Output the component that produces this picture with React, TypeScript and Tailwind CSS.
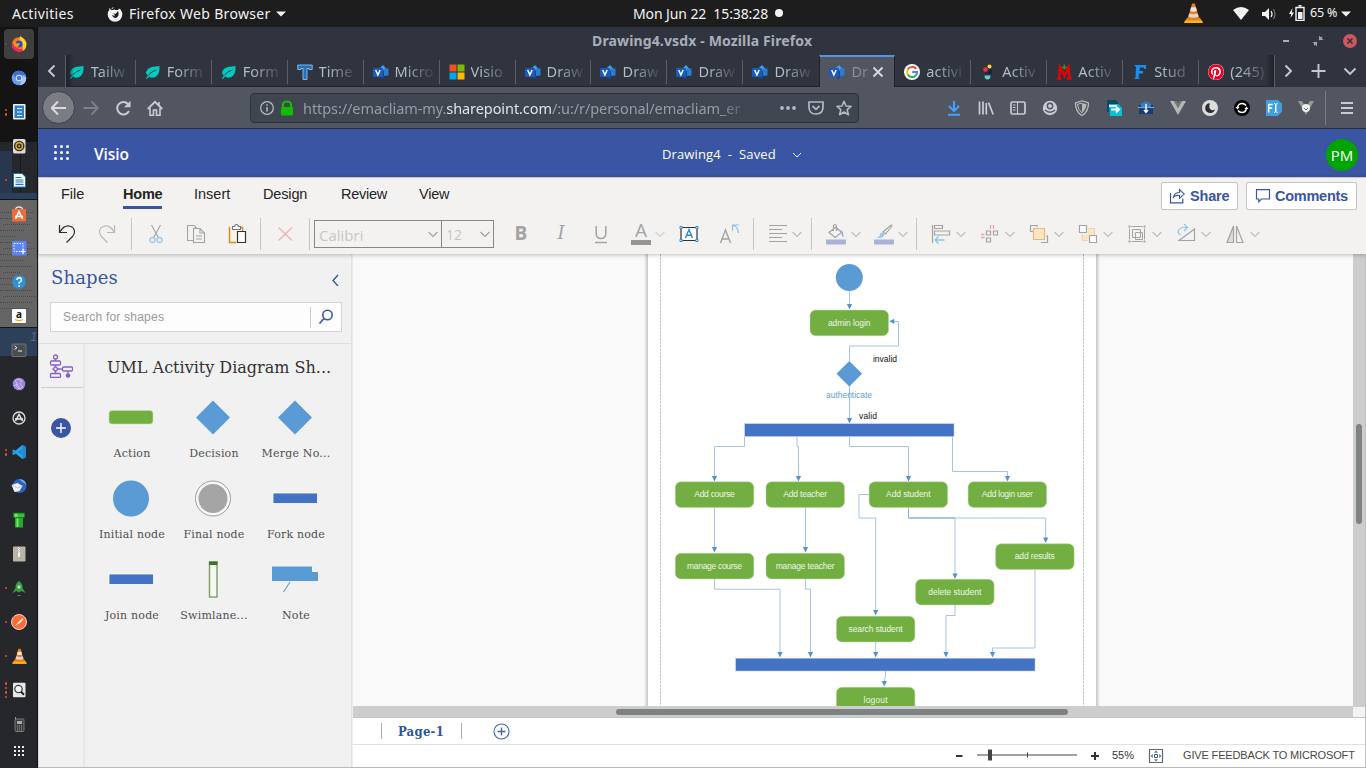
import React from "react";
import { FaPinterest } from "react-icons/fa";

type Kids = { children?: React.ReactNode; className?: string };

function Ic({ children, s = 16, className = "" }: Kids & { s?: number }) {
  return (
    <svg width={s} height={s} viewBox={`0 0 ${s} ${s}`} fill="none" className={`shrink-0 ${className}`}>
      {children}
    </svg>
  );
}

function Cone({ className = "" }: { className?: string }) {
  return (
    <svg viewBox="0 0 20 22" className={className}>
      <path d="M3 16h14l2.5 5.500H.5z" fill="#f08a00" />
      <path d="M1 19h18l1 2.500H0z" fill="#ffb31a" />
      <path d="M8.500 1h3l4.500 16q-6 3-12 0z" fill="#ef7d12" />
      <path d="M7.500 5h5l1.100 4q-3.600 1.500-7.200 0z" fill="#e8e8e8" />
      <path d="M5.500 11.500q4.500 1.500 9 0l1 3.500q-5.500 2-11 0z" fill="#d8d8d8" />
    </svg>
  );
}

function Caret() {
  return (
    <svg width="10" height="6" viewBox="0 0 10 6" className="shrink-0">
      <path d="M0 .5h10L5 5.500z" fill="#f2f2f2" />
    </svg>
  );
}

/* ---------- desktop top bar ---------- */
function TopBar() {
  return (
    <header className="flex h-[27px] shrink-0 items-center bg-[#1d1d1d] font-['Noto_Sans',sans-serif] text-[14px] text-[#f2f2f2]">
      <div className="w-[106px] pl-3 tracking-[0.350px]">Activities</div>
      <div className="flex w-[527px] items-center">
        <Ic className="ml-px mr-[6px]">
          <circle cx="8" cy="8.500" r="7.300" fill="#f2f2f2" />
          <path d="M3 0l2 3 3-2.500L13 0l-2 4H2z" fill="#1d1d1d" />
          <path d="M2 2l3 2.500L8 3l-2 4 4 1.500L7 12l-3-3z" fill="#f2f2f2" />
          <path d="M5 7l3.500 1L11 5q2 5-2 7-3 0-4-3l3 1-1-2z" fill="#1d1d1d" />
          <path d="M9 1l2 3 1-2.500z" fill="#1d1d1d" />
        </Ic>
        <span className="mr-[5px] w-[142px] whitespace-nowrap tracking-[0.330px]">Firefox Web Browser</span>
        <Caret />
      </div>
      <div className="flex w-[551px] items-center">
        <span className="-mt-px w-[142px] whitespace-pre tracking-[-0.1px]">Mon Jun 22  15:38:28</span>
        <span className="-mt-px size-2 rounded-full bg-[#f2f2f2]" />
      </div>
      <Cone className="-mt-[2px] h-[22px] w-[19px]" />
      <Ic className="ml-[30px]">
        <path d="M0 4q8-6 16 0L8 14z" fill="#f2f2f2" />
      </Ic>
      <Ic className="ml-[12px]">
        <path d="M1 6h3l4-4v12l-4-4H1z" fill="#f2f2f2" />
        <path d="M10 5q2 3 0 6" stroke="#eee" strokeWidth="1.300" />
        <path d="M12.500 3q3 5 0 10" stroke="#777" strokeWidth="1.200" />
      </Ic>
      <Ic className="-mt-px ml-[12px]">
        <path d="M3.500 3L0 9h2.200L1.500 13 5 7.500H2.800z" fill="#f2f2f2" />
        <path d="M7 2.500h8v13H7zM9.500.8h3" stroke="#f2f2f2" strokeWidth="1.400" />
        <path d="M9 7h4.500v7H9z" fill="#f2f2f2" />
      </Ic>
      <span className="ml-[5px] w-[31px] whitespace-nowrap text-[12.500px] tracking-[-0.200px]">65 %</span>
      <Caret />
    </header>
  );
}

/* ---------- dock ---------- */
const dockIcons: { dots: number; icon: React.ReactNode }[] = [
  {
    dots: 1,
    icon: (
      <>
        <circle cx="8" cy="8.500" r="7.200" fill="#ff7a1a" />
        <path d="M1 6q-1 9 7 9.800 5 0 7-4-8 4-12-3z" fill="#ec2461" />
        <path d="M9 0q6 3 6.500 8 0 5-4 7 2-6-3-9z" fill="#ffd52e" />
        <circle cx="8" cy="8" r="3.600" fill="#2d4fae" />
        <path d="M3 6l3 1.500L9 7l-2 4-4-1z" fill="#ff9a1f" />
      </>
    ),
  },
  {
    dots: 0,
    icon: (
      <>
        <circle cx="8" cy="8" r="7.300" fill="#6b9bf0" />
        <path d="M8 .7A7.300 7.300 0 0 1 14.500 5H8L5 8 2 4q2-3.300 6-3.300z" fill="#3f6fd2" />
        <path d="M9 15.200q6-1 6.300-7.500L12 6z" fill="#a9c6fa" />
        <circle cx="8" cy="8" r="3.200" fill="#dce8fd" />
        <circle cx="8" cy="8" r="2.300" fill="#4777d8" />
      </>
    ),
  },
  {
    dots: 2,
    icon: (
      <>
        <rect x="2" y="0" width="12.500" height="15.500" rx="1" fill="#f4f4f4" />
        <rect x="3.500" y="1.500" width="9.500" height="12.500" fill="#2b7fd0" />
        <path d="M6 4.500h5M6 8h5M6 11.500h5" stroke="#fff" strokeWidth="1.200" />
      </>
    ),
  },
  {
    dots: 0,
    icon: (
      <>
        <rect x="2" y="1" width="12.500" height="14.500" rx="1.500" fill="#dcdad2" />
        <circle cx="8.200" cy="8" r="5.300" fill="#303030" />
        <circle cx="8.200" cy="8" r="3.200" stroke="#e0b22c" strokeWidth="1.400" />
        <circle cx="8.200" cy="8" r="1" fill="#e0b22c" />
      </>
    ),
  },
  {
    dots: 1,
    icon: (
      <>
        <path d="M2 1h9l4 4v10.500H2z" fill="#1678b8" />
        <path d="M3 2h8l3 3v9.500H3z" fill="#fff" />
        <path d="M4.500 5.500h6M4.500 8h8M4.500 10h8M4.500 12.300h8" stroke="#1678b8" strokeWidth="1.200" />
      </>
    ),
  },
  {
    dots: 0,
    icon: (
      <>
        <path d="M4.500 4q0-3 3.500-3t3.500 3" stroke="#e6e0d8" strokeWidth="1.300" />
        <rect x="1" y="3" width="14" height="12.500" rx="1" fill="#ee6a3a" />
        <path d="M4.500 13L8 5.500l3.500 7.500M4 10.500h8" stroke="#fff" strokeWidth="1.600" />
      </>
    ),
  },
  {
    dots: 0,
    icon: (
      <>
        <rect x="1" y="1" width="14.500" height="14.500" rx="1" fill="#5a86ee" />
        <path d="M3 3.500h9v8H3z" stroke="#fff" strokeDasharray="1.500 1.300" />
        <path d="M12 9v5M9.500 11.500h5" stroke="#fff" strokeWidth="1.200" />
      </>
    ),
  },
  {
    dots: 0,
    icon: (
      <>
        <circle cx="8" cy="8" r="6.700" fill="#2e93d6" />
        <path d="M5.800 6q.2-2.300 2.400-2.300T10.500 6q0 1.300-2.300 2.500v1.200" stroke="#fff" strokeWidth="1.400" />
        <circle cx="8.200" cy="12" r=".9" fill="#fff" />
      </>
    ),
  },
  {
    dots: 0,
    icon: (
      <>
        <rect x="1" y="1" width="14" height="14" rx="1" fill="#fff" />
        <text x="8" y="10" textAnchor="middle" fontSize="10" fontWeight="bold" fontFamily="Noto Sans, sans-serif" fill="#111">
          a
        </text>
        <path d="M4 11.500q4 2.300 8 0" stroke="#f5a623" strokeWidth="1.100" />
      </>
    ),
  },
  {
    dots: 0,
    icon: (
      <>
        <rect x="1" y="2" width="14" height="12.500" rx="1" fill="#4a4d4f" stroke="#888" strokeWidth=".7" />
        <path d="M3.500 4L6 5.700 3.500 7.500M7 9h4" stroke="#eee" />
      </>
    ),
  },
  {
    dots: 0,
    icon: (
      <>
        <circle cx="8" cy="8" r="6.300" fill="#9b86dc" />
        <path d="M4 5l3-2 4 2-2 3 3 3-4 2-3-3 1-3zM3 10l3-2 3 5" stroke="#d2c4f4" strokeWidth=".9" />
      </>
    ),
  },
  {
    dots: 0,
    icon: (
      <>
        <circle cx="8" cy="8" r="6" fill="#303030" stroke="#ddd" strokeWidth="1.300" />
        <path d="M4.500 11L8 4.500l3.500 6.500M4 9h8" stroke="#eee" strokeWidth="1.400" />
      </>
    ),
  },
  {
    dots: 2,
    icon: (
      <>
        <path d="M11.500 1L15 2.500v11L11.500 15 2 6.500 1 9.500z" fill="#1f8ad2" />
        <path d="M11.500 1v14L1 6.500l1.500-1L11 11V5L2.500 11 1 9.700z" fill="#2aa3ec" />
      </>
    ),
  },
  {
    dots: 0,
    icon: (
      <>
        <circle cx="8.500" cy="8" r="7" fill="#2f62bd" />
        <path d="M8 1q6 0 7.500 6l-4-3z" fill="#6fb0ee" />
        <path d="M.5 7l6-2 5 3-3 5-5 1z" fill="#eef1f5" />
        <path d="M1 7l5.500 3 5-2" stroke="#b4bfd0" strokeWidth=".8" />
      </>
    ),
  },
  {
    dots: 0,
    icon: (
      <>
        <path d="M2.500 1h11v4.500h-11z" fill="#34c234" />
        <path d="M4 6h8v9.500H4z" fill="#2aa82a" />
        <path d="M4 1h2.500v4H4zM5.500 6.500h2v8.500h-2z" fill="#6fe86f" />
        <path d="M2.500 1h11" stroke="#0d6b18" />
      </>
    ),
  },
  {
    dots: 0,
    icon: (
      <>
        <rect x="2" y=".5" width="12.500" height="15" rx="1" fill="#b9b4a6" />
        <path d="M7.500 1v9" stroke="#f5f5f5" strokeDasharray="1 1" />
        <path d="M8.500 2v9" stroke="#f5f5f5" strokeDasharray="1 1" />
        <path d="M7 6.500h2V11H7z" fill="#f2f2f2" />
      </>
    ),
  },
  {
    dots: 1,
    icon: (
      <>
        <path d="M8 1q4 3 3.500 7l3 5-4-2-2.500 1.500L5.500 11l-4 2 3-5Q4 4 8 1z" fill="#3d9a41" />
        <circle cx="8" cy="7" r="1.800" fill="#a7e0c0" />
        <path d="M6 15.500h4" stroke="#666" />
      </>
    ),
  },
  {
    dots: 1,
    icon: (
      <>
        <circle cx="8" cy="8" r="7.500" fill="#ff6c37" stroke="#ffe3d6" strokeWidth=".9" />
        <path d="M3.500 12.500L9 6.500l2.500-2.300 1 1L10 8z" fill="#fff" />
      </>
    ),
  },
  { dots: 1, icon: null },
  {
    dots: 4,
    icon: (
      <>
        <rect x="2" y=".8" width="12.500" height="14.500" rx="1" fill="#e8e8e6" />
        <circle cx="7.500" cy="7" r="3.700" stroke="#444" strokeWidth="1.300" fill="#f5f5f5" />
        <path d="M10 9.800l3 3" stroke="#222" strokeWidth="2" />
      </>
    ),
  },
  {
    dots: 0,
    icon: (
      <>
        <path d="M4.500 1v4" stroke="#999" />
        <rect x="4" y="3" width="9" height="12.500" rx="1" fill="#3c3c3c" stroke="#8c8c8c" strokeWidth=".8" />
        <path d="M6 5h5v3H6z" fill="#aaa" />
        <path d="M6 10h5M6 12h5M6 14h5" stroke="#999" strokeDasharray="1 1" />
      </>
    ),
  },
];

const previewRows = [86, 84, 70, 62, 40, 80, 82, 78, 60, 84, 44, 52, 34, 85, 86, 83, 76];

function Dock() {
  return (
    <nav className="relative w-[38px] shrink-0 overflow-hidden bg-[#26272b]">
      <div className="absolute inset-0 flex flex-col">
        <div className="h-[115px] bg-[#141414]" />
        <div className="flex h-[51px] items-stretch bg-[#24272c] pt-[9px]">
          <div className="w-3 bg-[#28374c]" />
          <div className="ml-2 flex-1 border-l border-[#17191c] bg-[#26282c]" />
        </div>
        <div className="h-[6px] bg-[#2c405e]" />
        <div className="h-[129px] border-y border-[#161616] bg-[#656565] pt-3">
          {previewRows.map((w, i) => (
            <div
              key={i}
              className="mb-[5px] h-px border-t border-dotted border-[#474747]"
              style={{ width: `${w}%`, marginLeft: i % 4 === 2 ? 3 : 0 }}
            />
          ))}
        </div>
        <div className="h-[28px] bg-[#2c405a] pr-px text-right font-['Liberation_Sans',sans-serif] text-[12px] italic text-[#5c6a7b]">1</div>
        <div className="flex-1 bg-[#26272b]" />
      </div>
      <div className="relative flex h-full flex-col border-r border-[#121212]">
        {dockIcons.map((d, i) => (
          <div key={i} className="flex h-[34px] shrink-0 items-center">
            <div className="flex w-[4px] flex-col items-end gap-[2px]">
              {Array.from({ length: d.dots }, (_, k) => (
                <i key={k} className="-mr-[3px] size-[2.500px] shrink-0 rounded-full bg-[#e5532a]" />
              ))}
            </div>
            <div className={`flex size-[30px] items-center justify-center rounded-[4px] ${i === 0 ? "bg-[#4a4a4a]/80" : ""}`}>
              {d.icon ? <Ic>{d.icon}</Ic> : <Cone className="h-4 w-[15px]" />}
            </div>
          </div>
        ))}
        <div className="flex flex-1 items-start pl-[14px] pt-[5px]">
          <div className="grid grid-cols-3 gap-[2px]">
            {Array.from({ length: 9 }, (_, k) => (
              <i key={k} className="size-[2px] bg-[#eee]" />
            ))}
          </div>
        </div>
      </div>
    </nav>
  );
}

/* ---------- browser chrome ---------- */
const Leaf = () => (
  <Ic>
    <path d="M1 9.500q0-5 6-6.500Q11 2.500 14.500 2q.5 8.500-4 11Q6 14.500 4 12.500L2 15 .8 14.500 3 11.500z" fill="#00c9c0" />
    <path d="M3.500 11Q7 7 11.500 6" stroke="#30343f" />
  </Ic>
);
const VisioFav = () => (
  <Ic>
    <path d="M5 6l5-5 3.500 4L9 11z" fill="#45a3ea" />
    <path d="M11 4.500h4.500v7L10 12z" fill="#2b7cd3" />
    <path d="M6 10l5-4v7.500L8.500 15.500z" fill="#16478f" />
    <rect x="0" y="4" width="10" height="9" rx="1" fill="#185abd" />
    <path d="M2.700 6l2.200 5 2.200-5" stroke="#fff" strokeWidth="1.500" />
  </Ic>
);
const tabs: { icon: React.ReactNode; t: string }[] = [
  { icon: <Leaf />, t: "Tailw" },
  { icon: <Leaf />, t: "Form" },
  { icon: <Leaf />, t: "Form" },
  {
    icon: (
      <Ic>
        <path d="M.8 1h14.400v4.500h-3.200V4.500h-2v11H6v-11H4v1H.8z" fill="#2470b8" stroke="#8fc3ee" strokeWidth=".9" />
      </Ic>
    ),
    t: "Time",
  },
  { icon: <VisioFav />, t: "Micro" },
  {
    icon: (
      <Ic>
        <path d="M.5.500h7v7h-7z" fill="#f25022" />
        <path d="M8.500.5h7v7h-7z" fill="#7fba00" />
        <path d="M.5 8.500h7v7h-7z" fill="#00a4ef" />
        <path d="M8.500 8.500h7v7h-7z" fill="#ffb900" />
      </Ic>
    ),
    t: "Visio",
  },
  { icon: <VisioFav />, t: "Draw" },
  { icon: <VisioFav />, t: "Draw" },
  { icon: <VisioFav />, t: "Draw" },
  { icon: <VisioFav />, t: "Draw" },
  { icon: <VisioFav />, t: "Dr" },
  {
    icon: (
      <Ic>
        <circle cx="8" cy="8" r="8" fill="#fff" />
        <path d="M12.300 5A5 5 0 0 0 3.800 5.500" stroke="#ea4335" strokeWidth="2" />
        <path d="M3.800 5.500a5 5 0 0 0 0 5" stroke="#fbbc05" strokeWidth="2" />
        <path d="M3.800 10.500a5 5 0 0 0 7.700 1.300" stroke="#34a853" strokeWidth="2" />
        <path d="M11.500 11.800Q13 10.500 13 8H8.200" stroke="#4285f4" strokeWidth="2" />
      </Ic>
    ),
    t: "activi",
  },
  {
    icon: (
      <Ic>
        <circle cx="9.500" cy="2.500" r="2" fill="#ffd92e" />
        <circle cx="5.500" cy="5.500" r="2.300" fill="#f5303c" />
        <path d="M8 5.500h4V10H5V8.500h3z" fill="#15224a" />
        <path d="M4.500 11.500h6q0 4-3 4t-3-4z" fill="#5fd3c8" />
      </Ic>
    ),
    t: "Activ",
  },
  {
    icon: (
      <Ic>
        <path d="M1 14.500h4M11 14.500h4.500M3 14L4 3l4.500 9L12.500 3l1 11" stroke="#f00000" strokeWidth="2.300" />
        <path d="M8.300.5v5M6 3.500h5" stroke="#3c8f2d" strokeWidth="1.500" />
      </Ic>
    ),
    t: "Activ",
  },
  {
    icon: (
      <Ic>
        <path d="M2 1h12v4h-1.500L11.500 3.500H8L7.500 7H11v2.500H7l-.5 4L8 15H2l1.500-1.500L4 3z" fill="#1b8df0" />
      </Ic>
    ),
    t: "Stud",
  },
  {
    icon: (
      <span className="flex size-4 shrink-0 items-center justify-center rounded-full bg-white">
        <FaPinterest size={16} color="#e60023" />
      </span>
    ),
    t: "(245)",
  },
];

function Tabs() {
  return (
    <div className="flex h-[32px] shrink-0 items-stretch text-[#b4bac8]">
      <div className="flex w-[28px] items-center justify-center border-r border-[#5b5f6a]">
        <Ic s={14}>
          <path d="M9.500 1.500L4 7l5.500 5.500" stroke="#c4c8d0" strokeWidth="1.900" />
        </Ic>
      </div>
      <div className="relative flex min-w-0 w-[1208px] overflow-hidden pb-px shadow-[inset_0_-1px_0_#20232a]">
        {tabs.map((tab, i) => {
          const on = i === 10;
          return (
            <div
              key={i}
              className={`relative flex w-[75.970px] shrink-0 items-center ${i === 0 ? "-ml-[6.300px]" : ""} ${
                on ? "-mb-px border-x border-t-2 border-x-[#20232a] border-t-[#5294e2] bg-[#525661] pl-[9px] pt-0" : "pl-[9px] pt-[2px]"
              }`}
            >
              {tab.icon}
              <span
                className={`ml-[6px] whitespace-nowrap font-['Noto_Sans',sans-serif] text-[14.500px] tracking-[0.100px] [mask-image:linear-gradient(90deg,#000_25%,rgba(0,0,0,.15)_36px)] ${
                  on ? "w-[17px] opacity-60" : ""
                }`}
              >
                {tab.t}
              </span>
              {on && (
                <Ic s={12} className="ml-[4px]">
                  <path d="M1.500 1.500l9 9m0-9l-9 9" stroke="#d5d8de" strokeWidth="1.900" />
                </Ic>
              )}
              {!on && i !== 9 && <i className="absolute right-0 top-[5px] h-6 w-px bg-[#5b5f6a]" />}
            </div>
          );
        })}
        <i className="absolute inset-y-0 right-0 w-[8px] bg-gradient-to-r from-transparent to-[#202228]" />
        <i className="absolute inset-y-0 left-0 w-[8px] bg-gradient-to-l from-transparent to-[#202228]" />
      </div>
      <div className="flex flex-1 items-center gap-[16px] border-l border-[#5b5f6a] pl-[6px]">
        <Ic s={14}>
          <path d="M4.500 1.500L10 7l-5.500 5.500" stroke="#c4c8d0" strokeWidth="1.900" />
        </Ic>
        <Ic s={16}>
          <path d="M7.500 1v14M.5 8h14" stroke="#c4c8d0" strokeWidth="1.900" />
        </Ic>
        <Ic s={14}>
          <path d="M1.500 4.500L7 10l5.500-5.500" stroke="#c4c8d0" strokeWidth="1.900" />
        </Ic>
      </div>
    </div>
  );
}

const extIcons: React.ReactNode[] = [
  <path d="M8 1v9.500M3 6l5 5 5-5M2 14.700h12" stroke="#45a1ff" strokeWidth="2" />,
  <path d="M1.500 1.500v13M5 1.500v13M8.300 3v11.500M10.500 2.500l4.700 12" stroke="#c8ccd4" strokeWidth="1.700" />,
  <>
    <rect x="1" y="2" width="14" height="12" rx="1.500" stroke="#c8ccd4" strokeWidth="1.700" />
    <path d="M7.500 2v12M3 5h2.500M3 7.500h2.500M3 10h2.500" stroke="#c8ccd4" />
  </>,
  <>
    <circle cx="8" cy="8" r="7.200" fill="#c8ccd4" />
    <circle cx="8" cy="6" r="2.700" fill="#c8ccd4" stroke="#525661" strokeWidth="1.500" />
    <path d="M3 10q5 4.500 10 0" stroke="#525661" strokeWidth="1.500" />
  </>,
  <>
    <path d="M8 .8L14.500 3q0 9-6.500 12.500Q1.500 12 1.500 3z" stroke="#c2c2c2" strokeWidth="1.200" />
    <path d="M8 3l4.500 1.300Q12 10 8 13z" fill="#b8b8b8" />
    <path d="M8 3L3.500 4.300Q4 10 8 13" stroke="#c2c2c2" />
  </>,
  <>
    <path d="M1 0h9l2 2v10H1z" fill="#0d4a68" />
    <path d="M3 4h9l4 4v8H4z" fill="#06c1dc" />
    <path d="M3 6h8M5 9.500h8M10 6.500l3 3-3 3" stroke="#fff" strokeWidth="1.800" />
  </>,
  <>
    <path d="M1 5h14v9H1z" fill="#153d73" />
    <path d="M3 4q5-5 10 0v3H3z" fill="#3a7cc8" />
    <path d="M0 7.500h16" stroke="#6fa6de" strokeWidth="1.200" />
    <path d="M8 4v8M6 10l2 2.500L10 10" stroke="#fff" strokeWidth="1.400" />
  </>,
  <>
    <path d="M0 1h4l4 7 4-7h4L8 15z" fill="#b6b6b6" />
    <path d="M4 1h2.500L8 3.500 9.500 1H12L8 8z" fill="#777" />
  </>,
  <>
    <circle cx="8" cy="8" r="8" fill="#dcdcdc" />
    <path d="M8 3.200a4.900 4.900 0 1 0 4.900 6q-2.500 2-4.500 0T8 3.200z" fill="#2e2e30" />
  </>,
  <>
    <circle cx="8" cy="8" r="8" fill="#050505" />
    <path d="M3.500 7.500Q4.500 3.500 8 3.500q2.500 0 4 2M12.500 8.500q-1 4-4.500 4-2.500 0-4-2" stroke="#fff" strokeWidth="1.500" />
    <path d="M1.500 7h4L3.500 9.500zM10.500 9h4l-2-2.500z" fill="#fff" />
  </>,
  <>
    <path d="M0 0h12l4 3.500v8L12 16H0z" fill="#3f9fe0" />
    <path d="M2.700 12.500V4.500h4M3 8h3.200" stroke="#fff" strokeWidth="1.400" />
    <path d="M8 3.500q1.800 0 1.800 1.300v6.400q0 1.300-1.800 1.300m3.600-9q-1.800 0-1.800 1.300v6.400q0 1.300 1.800 1.300" stroke="#fff" />
  </>,
  <>
    <path d="M0 1h4l4 7 4-7h4L8 15z" fill="#9a9a9a" />
    <circle cx="8" cy="8" r="4" fill="#eee" />
    <path d="M6 8l2 2 2-2" stroke="#777" />
  </>,
];

function NavBar() {
  return (
    <div className="flex h-[42px] shrink-0 items-center border-b border-[#2b2d35] bg-[#525661]">
      <div className="ml-[4px] flex size-[33px] shrink-0 items-center justify-center rounded-full border border-[#3d4049] bg-[#7a7d84]">
        <Ic>
          <path d="M15 8H1.500M7 1.500L.7 8 7 14.500" stroke="#d8dade" strokeWidth="1.900" />
        </Ic>
      </div>
      <Ic className="ml-[8px]">
        <path d="M.5 8h14M8.500 1.500L14.800 8l-6.300 6.500" stroke="#7d818a" strokeWidth="1.800" />
      </Ic>
      <Ic className="ml-[16px]">
        <path d="M14 11A6.200 6.200 0 1 1 13 4l1.500 2" stroke="#c8ccd4" strokeWidth="2" />
        <path d="M15.500.8v6.500H9z" fill="#c8ccd4" />
      </Ic>
      <Ic className="ml-[16px]">
        <path d="M.7 9L8 1.800 15.300 9" stroke="#c8ccd4" strokeWidth="1.800" />
        <path d="M3 8v7.200h3.500V10h3v5.200H13V8M12 2v3" stroke="#c8ccd4" strokeWidth="1.600" />
      </Ic>
      <div className="ml-[87px] flex h-[30px] w-[609px] shrink-0 items-center rounded-[4px] border border-[#2d3039] bg-[#404552]">
        <Ic className="ml-[8px]">
          <circle cx="8" cy="8" r="6.300" stroke="#b9bdc6" strokeWidth="1.200" />
          <path d="M8 7v4.500M8 4.300v1.500" stroke="#b9bdc6" strokeWidth="1.500" />
        </Ic>
        <Ic className="ml-[4px]">
          <path d="M4 8V5q0-3.500 4-3.500T12 5v3" stroke="#12bc00" strokeWidth="2.200" />
          <rect x="2" y="7" width="12" height="8.500" rx="1" fill="#12bc00" />
        </Ic>
        <div className="ml-[8px] mt-[2px] w-[441px] whitespace-nowrap font-['Noto_Sans',sans-serif] text-[14.500px] tracking-[-0.080px] text-[#989ca6] [mask-image:linear-gradient(90deg,#000_94%,rgba(0,0,0,.25))]">
          https://emacliam-my.<span className="text-[#dfe2e8]">sharepoint.com</span>/:u:/r/personal/emacliam_er
        </div>
        <Ic className="ml-[36px]">
          <circle cx="2" cy="8" r="1.900" fill="#b4b8c2" />
          <circle cx="8" cy="8" r="1.900" fill="#b4b8c2" />
          <circle cx="14" cy="8" r="1.900" fill="#b4b8c2" />
        </Ic>
        <Ic className="ml-[12px]">
          <path d="M1 2h14v5q0 7-7 7T1 7z" stroke="#b4b8c2" strokeWidth="1.700" />
          <path d="M4.500 6L8 9.300 11.500 6" stroke="#b4b8c2" strokeWidth="1.800" />
        </Ic>
        <Ic className="ml-[12px]">
          <path d="M8 1.300l2 4.700 5 .4-3.800 3.300 1.200 5L8 12l-4.400 2.700 1.200-5L1 6.400 6 6z" stroke="#b4b8c2" strokeWidth="1.600" strokeLinejoin="round" />
        </Ic>
      </div>
      <div className="ml-[87px] flex shrink-0 gap-4">
        {extIcons.map((e, i) => (
          <Ic key={i}>{e}</Ic>
        ))}
      </div>
      <i className="ml-[11px] h-[34px] w-px shrink-0 bg-[#787c85]" />
      <Ic className="ml-[13px]">
        <path d="M2 3h12M2 8h12M2 13h12" stroke="#c8ccd4" strokeWidth="1.800" />
      </Ic>
    </div>
  );
}

function TitleBar() {
  return (
    <div className="flex h-[28px] shrink-0 items-center pl-[554px] text-[#a9aebb]">
      <div className="-mt-[2px] w-[683px] whitespace-nowrap font-['Noto_Sans',sans-serif] text-[14px] font-bold tracking-[0.140px]">
        Drawing4.vsdx - Mozilla Firefox
      </div>
      <div className="flex items-center">
        <Ic s={16} className="ml-[3px]">
          <path d="M5 8h6" stroke="#c0c3ca" strokeWidth="1.700" />
        </Ic>
        <Ic s={16} className="ml-[16px]">
          <path d="M9 2.500V7h4.500zM7 13.500V9H2.500z" fill="#a0a4ad" />
          <path d="M9 7l3-3M7 9l-3 3" stroke="#a0a4ad" strokeWidth="1.200" />
        </Ic>
        <span className="ml-[17px] flex size-[14px] items-center justify-center rounded-full bg-[#cc575d]">
          <Ic s={8}>
            <path d="M1.500 1.500l5 5m0-5l-5 5" stroke="#2f343f" strokeWidth="1.700" />
          </Ic>
        </span>
      </div>
    </div>
  );
}

/* ---------- Visio ---------- */
function Chev({ className = "", c = "#bdbdbd" }: { className?: string; c?: string }) {
  return (
    <Ic s={10} className={className}>
      <path d="M.5 3L5 7.500 9.500 3" stroke={c} strokeWidth="1.100" />
    </Ic>
  );
}
const Sep = ({ className = "" }: { className?: string }) => <i className={`h-8 w-px shrink-0 bg-[#c6c6c6] ${className}`} />;
const G = "#a3a3a3";

function Ribbon() {
  const font = "font-['Open_Sans',sans-serif]";
  return (
    <div className="relative z-10 flex h-[77px] shrink-0 flex-col border-l border-t border-[#c8c6c4] bg-[#f3f2f1] shadow-[0_1px_4px_rgba(0,0,0,0.25)]">
      <div className="flex h-[40px] items-start font-['Liberation_Sans',sans-serif] text-[14.500px] text-[#252423]">
        <span className="ml-[22px] mt-[6px] w-[62px]">File</span>
        <span className="mt-[6px] w-[71px]">
          <span className="inline-block h-[25px] w-[39px] whitespace-nowrap border-b-[3px] border-[#3955a3] font-bold tracking-[-0.200px]">Home</span>
        </span>
        <span className="mt-[6px] w-[69px]">Insert</span>
        <span className="mt-[6px] w-[78px] tracking-[-0.150px]">Design</span>
        <span className="mt-[6px] w-[78px] tracking-[-0.250px]">Review</span>
        <span className="mt-[6px] tracking-[-0.250px]">View</span>
        <div className="ml-auto mr-[9px] mt-[4px] flex gap-[8px] font-bold text-[#3955a3]">
          <button className="flex h-[28px] w-[77px] items-center rounded-[2px] border border-[#c4c4c4] bg-white pl-[7px]">
            <Ic>
              <path d="M1.500 5v9.900h12.300V10.500" stroke="#3955a3" strokeWidth="1.200" />
              <path d="M4.500 9Q5.500 4.500 10.500 4.500V1.500L15.300 6l-4.800 4.300V7.500Q6.500 7 4.500 9z" stroke="#3955a3" strokeWidth="1.100" />
            </Ic>
            <span className="ml-[5px] mt-px tracking-[-0.200px]">Share</span>
          </button>
          <button className="flex h-[28px] w-[111px] items-center rounded-[2px] border border-[#c4c4c4] bg-white pl-[8px]">
            <Ic>
              <path d="M1.500 1.600h13v9.400H6.500L3.800 13.800V11H1.500z" stroke="#3955a3" strokeWidth="1.200" />
            </Ic>
            <span className="ml-[4px] mt-px tracking-[-0.250px]">Comments</span>
          </button>
        </div>
      </div>
      <div className="flex h-8 items-center pl-4">
        <Ic s={24}>
          <path d="M4.500 3v7.500H12M5 10Q8.500 3.500 14 4q5.500 1 5.500 6 0 2-2 4.500L11.500 20.500" stroke="#2b2b2b" strokeWidth="1.200" />
        </Ic>
        <Ic s={24} className="ml-4">
          <path d="M19.500 3v7.500H12M19 10Q15.500 3.500 10 4q-5.500 1-5.500 6 0 2 2 4.500l6 6" stroke="#b8b8b8" strokeWidth="1.200" />
        </Ic>
        <Sep className="ml-3" />
        <Ic s={24} className="ml-3">
          <path d="M7.500 3l6.800 12.500M16.500 3L9.700 15.500" stroke={G} strokeWidth="1.100" />
          <circle cx="8.500" cy="18" r="2.500" stroke="#9fc7e6" strokeWidth="1.300" />
          <circle cx="15.500" cy="18" r="2.500" stroke="#9fc7e6" strokeWidth="1.300" />
        </Ic>
        <Ic s={24} className="ml-4">
          <path d="M9 18.500H3.500v-15H10l3 3M9.500 6.500h6.500l4.500 4.500v9.500h-11zM16 6.500V11h4.500M12 14h6M12 17h6" stroke={G} strokeWidth="1.100" />
        </Ic>
        <Ic s={24} className="ml-[17px]">
          <path d="M5 5.500H4.500v15H11M16 5.500h1.500V9" stroke="#e08a1e" strokeWidth="1.500" />
          <path d="M6 7h11v3H12v9H6z" fill="#fbf6ec" />
          <path d="M7.500 7.500v-3h2q.5-2 2-2t2 2h2v3z" stroke="#777" strokeWidth="1.100" fill="#fff" />
          <path d="M12.500 9.500h8v11h-8z" stroke="#333" strokeWidth="1.200" fill="#fff" />
        </Ic>
        <Sep className="ml-[11px]" />
        <Ic s={24} className="ml-3">
          <path d="M5.500 5.500l13.500 13M19 5.500L5.500 18.500" stroke="#f2aeb0" strokeWidth="1.200" />
        </Ic>
        <Sep className="ml-3" />
        <div className={`ml-1 flex h-7 w-[128px] shrink-0 items-center justify-between border border-[#8a8886] pl-1 pr-[3px] text-[15px] text-[#c8c6c4] ${font}`}>
          <span className="mt-[2px]">Calibri</span>
          <Chev c="#a0a0a0" />
        </div>
        <div className={`-ml-px flex h-7 w-[53px] shrink-0 items-center justify-between border border-[#8a8886] pl-1 pr-[3px] text-[14px] text-[#c8c6c4] ${font}`}>
          <span>12</span>
          <Chev c="#9c9c9c" />
        </div>
        <span className={`-mt-[2px] ml-[15px] w-6 text-center text-[19px] font-bold leading-6 text-[#a3a3a3] ${font}`}>B</span>
        <span className="-mt-[2px] ml-4 w-6 text-center font-['DejaVu_Serif',serif] text-[18px] italic leading-6 text-[#a3a3a3]">I</span>
        <Ic s={24} className="ml-4">
          <path d="M7.200 4v7.500q0 5 4.800 5t4.800-5V4M6 20.500h12" stroke={G} strokeWidth="1.500" />
        </Ic>
        <div className={`ml-[18px] flex h-6 w-5 flex-col items-center ${font}`}>
          <span className="-mt-px h-[17px] text-[19px] leading-[18px] text-[#a3a3a3]">A</span>
          <i className="mt-[2px] h-[5px] w-5 shrink-0 bg-[#979593]" />
        </div>
        <Chev className="ml-1" c="#d0d0d0" />
        <Ic s={24} className="ml-3">
          <path d="M4 5.500h16v13H4z" fill="#fff" stroke="#333" strokeWidth="1.200" />
          <path d="M8.500 16L12 7.500l3.500 8.500M9.500 13.200h5" stroke="#2b88d8" strokeWidth="1.400" />
          <path d="M3 4.500h2.200v2.200H3zM18.800 4.500H21v2.200h-2.200zM3 17.300h2.200v2.200H3zM18.800 17.300H21v2.200h-2.200z" fill="#fff" stroke="#2b88d8" />
        </Ic>
        <Ic s={24} className="ml-4">
          <path d="M3.500 21L8.500 8l5 13M5.200 17h6.800" stroke={G} strokeWidth="1.400" />
          <path d="M15.500 9V3h6.500M16 3.500q4.500.5 5.500 7.500" stroke="#8fc0e4" strokeWidth="1.200" />
        </Ic>
        <Sep className="ml-3" />
        <Ic s={24} className="ml-3">
          <path d="M3 3.500h18M3 7.500h13M3 11.500h18M3 15.500h13M3 19.500h18" stroke={G} strokeWidth="1.100" />
        </Ic>
        <Chev className="ml-[2px]" />
        <Sep className="ml-[9px]" />
        <Ic s={24} className="ml-3">
          <path d="M2 17.500h20v5H2z" fill="#a9b3d6" />
          <path d="M5 10.500L12 5l5.500 5.500L11 15.500zM9.500 9V4.500q0-2 1.500-2t1.500 2V9" stroke={G} strokeWidth="1.200" />
          <path d="M16 8q3.500 0 3.500 7-2.500-1-1.500-4z" fill="#7fb2da" />
        </Ic>
        <Chev className="ml-[3px]" />
        <Ic s={24} className="ml-[11px]">
          <path d="M2 17.500h20v5H2z" fill="#a9b3d6" />
          <path d="M11 10l8-7q1.500 0 .5 1.500L13.500 12z" stroke={G} strokeWidth="1.200" />
          <path d="M4 15.500q4-.5 4.500-4.500 3-1 4 1.500-1.500 4.500-8.500 3z" fill="#9cc6e6" />
        </Ic>
        <Chev className="ml-[2px]" />
        <Sep className="ml-2" />
        <Ic s={24} className="ml-3">
          <path d="M3.500 3v18M5.500 3.500h8v3h-8zM5.500 9h15v4h-15z" stroke={G} strokeWidth="1.200" />
          <path d="M15.500 18H6M9.500 14.500L6 18l3.500 3.500" stroke="#8cc4ea" strokeWidth="1.300" />
        </Ic>
        <Chev className="ml-[3px]" />
        <Ic s={24} className="ml-3">
          <path d="M8.500 9h4v4h-4zM15.500 9h4v4h-4zM8.500 16h4v4h-4z" stroke={G} strokeWidth="1.200" />
          <path d="M12.500 3v4M15.500 3v4M3 12.500h3.500M3 15.500h3.500" stroke="#f0a0a4" strokeWidth="1.300" />
        </Ic>
        <Chev className="ml-[3px]" />
        <Ic s={24} className="ml-3">
          <path d="M7 9.500H3.500v-6h6.500V5M14 20.500h6.500v-6.500H19" stroke={G} strokeWidth="1.200" />
          <path d="M6.500 6.500h11v11h-11z" fill="#fae6c5" stroke="#e9ba7c" strokeWidth="1.200" />
        </Ic>
        <Chev className="ml-[3px]" />
        <Ic s={24} className="ml-3">
          <path d="M12 6.500h6v6M6.500 12.500v5.500H12" fill="#fae6c5" stroke="#e9ba7c" strokeWidth="1.200" />
          <path d="M12 6.500h6v6h-6zM6.500 12.500h6v5.500h-6z" fill="#fae6c5" />
          <path d="M3.500 3.500h7v7h-7zM13.500 13.500h7v7h-7z" fill="#fff" stroke={G} strokeWidth="1.200" />
        </Ic>
        <Chev className="ml-[3px]" />
        <Ic s={24} className="ml-3">
          <path d="M4.500 6.500v11M6.500 4.500h11M19.500 6.500v11M6.500 19.500h11M7.500 7.500h8v8h-8zM10.500 10.500h7v7h-7z" stroke={G} />
          <path d="M3.500 3.500h2v2h-2zM18.500 3.500h2v2h-2zM3.500 18.500h2v2h-2zM18.500 18.500h2v2h-2z" fill={G} />
        </Ic>
        <Chev className="ml-[3px]" />
        <Ic s={24} className="ml-3">
          <path d="M5 18.500L20.500 7v11.500z" stroke={G} strokeWidth="1.200" />
          <path d="M6.500 13q-3-1.500-2-5Q6 5.500 9 5.500h4M10 2l3.500 3.500L10 9" stroke="#8cc4ea" strokeWidth="1.200" />
        </Ic>
        <Chev className="ml-[3px]" />
        <Ic s={24} className="ml-3">
          <path d="M10.500 4v16.500H4z" fill="#ddd" stroke={G} strokeWidth="1.200" />
          <path d="M13.500 4v16.500H20z" stroke={G} strokeWidth="1.200" />
        </Ic>
        <Chev className="ml-[3px]" />
      </div>
    </div>
  );
}

const shapes: { n: string; d: React.ReactNode }[] = [
  { n: "Action", d: <rect x="8" y="20.500" width="44" height="13.500" rx="3" fill="#72ae42" stroke="#c6e0b0" strokeWidth=".6" /> },
  { n: "Decision", d: <path d="M30 10.500L47 27.500 30 44.500 13 27.500z" fill="#5b9bd5" /> },
  { n: "Merge No...", d: <path d="M30 10.500L47 27.500 30 44.500 13 27.500z" fill="#5b9bd5" /> },
  { n: "Initial node", d: <circle cx="30" cy="27.500" r="18" fill="#5b9bd5" /> },
  {
    n: "Final node",
    d: (
      <>
        <circle cx="30" cy="27.500" r="17.500" fill="#f8f8f8" stroke="#9c9c9c" strokeWidth="1" />
        <circle cx="30" cy="27.500" r="14.500" fill="#a5a5a5" />
      </>
    ),
  },
  { n: "Fork node", d: <rect x="8" y="22" width="44.500" height="10.500" fill="#4472c4" stroke="#fff" strokeWidth=".8" /> },
  { n: "Join node", d: <rect x="8" y="22" width="44.500" height="10.500" fill="#4472c4" stroke="#fff" strokeWidth=".8" /> },
  {
    n: "Swimlane...",
    d: (
      <>
        <rect x="26.500" y="10" width="7.500" height="35" fill="#f6f8f3" stroke="#7f9a65" strokeWidth="1.400" />
        <rect x="26" y="9.500" width="8.500" height="3.500" fill="#47702a" />
      </>
    ),
  },
  {
    n: "Note",
    d: (
      <>
        <path d="M7 14.500h40l6 5.500v9H7z" fill="#5b9bd5" />
        <path d="M47 14.500V20h6" fill="#fff" />
        <path d="M25 30L18.500 40" stroke="#5b9bd5" strokeWidth="1.100" />
      </>
    ),
  },
];

function Sidebar() {
  return (
    <aside className="flex w-[314px] shrink-0 flex-col border-r border-[#e2e2e2] border-l border-l-[#d8d8d8] bg-[#f1f1f1]">
      <div className="flex h-[90px] shrink-0 flex-col border-b border-[#dedede] pl-[11px]">
        <div className="flex h-[48px] items-center justify-between pb-[2px] pr-[10px]">
          <h2 className="pl-px font-['DejaVu_Serif',serif] text-[18px] tracking-[0.150px] text-[#3955a3]">Shapes</h2>
          <Ic s={12} className="mt-[6px]">
            <path d="M9 1L4 6.500 9 12" stroke="#3955a3" strokeWidth="1.400" />
          </Ic>
        </div>
        <div className="flex h-[30px] w-[292px] items-center border border-[#d4d4d4] bg-[#fdfdfd] pl-3">
          <span className="w-[247px] font-['Liberation_Sans',sans-serif] text-[12px] tracking-[0.220px] text-[#9a9a9a]">Search for shapes</span>
          <i className="h-[21px] w-px bg-[#ccc]" />
          <Ic className="ml-[7px]">
            <circle cx="9.500" cy="6" r="4.700" stroke="#3955a3" strokeWidth="1.600" />
            <path d="M6 9.500L1.500 14.500" stroke="#3955a3" strokeWidth="1.700" />
          </Ic>
        </div>
      </div>
      <div className="flex min-h-0 flex-1">
        <div className="flex w-[44px] flex-col items-center">
          <div className="ml-[2px] flex h-[44px] w-[42px] items-center justify-center border-b border-[#ccc]">
            <svg width="24" height="24" viewBox="0 0 24 24" fill="none" stroke="#8661c5" strokeWidth="1.300" className="-ml-[2px]">
              <circle cx="6.500" cy="3" r="2" />
              <rect x="1.500" y="7" width="10" height="4" rx="1" />
              <path d="M6.500 5v2M6.500 11v2M8.500 15h5M6.500 17v2M19 17.500v2" />
              <path d="M6.500 12.500L9 15l-2.500 2.500L4 15z" />
              <rect x="13.500" y="13" width="10" height="4" rx="1" />
              <rect x="1.500" y="19.500" width="10" height="4" rx="1" />
              <circle cx="19" cy="21.500" r="1.700" fill="#8661c5" />
            </svg>
          </div>
          <div className="mt-[30px] flex size-5 items-center justify-center rounded-full bg-[#3955a3]">
            <Ic s={10}>
              <path d="M5 0v10M0 5h10" stroke="#fff" strokeWidth="1.400" />
            </Ic>
          </div>
        </div>
        <div className="min-w-0 flex-1 shadow-[inset_3px_0_3px_-1px_rgba(0,0,0,0.05)]">
          <h3 className="h-[46px] pl-[24px] pt-[12px] font-['DejaVu_Serif',serif] text-[16px] leading-[24px] whitespace-nowrap text-[#333]">
            UML Activity Diagram Sh...
          </h3>
          <div className="ml-[8px] grid w-[246px] grid-cols-3">
            {shapes.map((s) => (
              <div key={s.n} className="flex h-[81px] flex-col items-center">
                <svg width="60" height="55" viewBox="0 0 60 55" fill="none" className="mr-[2px]">
                  {s.d}
                </svg>
                <span className="whitespace-nowrap font-['DejaVu_Serif',serif] text-[11px] leading-[18px] tracking-[0.200px] text-[#505050]">{s.n}</span>
              </div>
            ))}
          </div>
        </div>
      </div>
    </aside>
  );
}

const nodes: [string, number, number, number][] = [
  ["admin login", 849.2, 322.8, 42.5],
  ["Add course", 714.5, 494.5, 40.5],
  ["Add teacher", 805.2, 494.5, 44],
  ["Add student", 908.3, 494.5, 44.5],
  ["Add login user", 1007.3, 494.5, 51],
  ["manage course", 714.5, 566, 55],
  ["manage teacher", 805.2, 566, 59],
  ["add results", 1034.8, 556.5, 40],
  ["delete student", 954.8, 592, 53],
  ["search student", 875.6, 629, 54],
  ["logout", 875.6, 700, 24],
];
const links: [string, number, number][] = [
  ["M849.500 290V304", 849.5, 310],
  ["M849.500 386V418", 849.5, 424],
  ["M714.500 507V547", 714.5, 553],
  ["M805.500 507V547", 805.5, 553],
  ["M744.500 437V446.500H714.500V476", 714.5, 482],
  ["M797 437V446.500H798.500V476", 798.5, 482],
  ["M849.500 437V446.500H908.500V476", 908.5, 482],
  ["M952.500 437V471.500H1007.500V476", 1007.5, 482],
  ["M869 494.500H859V518H875.700V610", 875.7, 616],
  ["M908.500 508V518H955V574", 955, 579.5],
  ["M908.500 508V518H1045.700V538", 1045.7, 543.5],
  ["M714.500 579V589.200H780V653", 780, 658],
  ["M805.500 579V589.200H810.500V653", 810.5, 658],
  ["M875.700 642V653", 875.7, 658],
  ["M955 605V615.500H946V653", 946, 658],
  ["M1035 570V648H992.500V653", 992.5, 658],
  ["M885.500 671V676L884.300 681", 884.3, 687],
];

function Canvas() {
  return (
    <svg width="1000" height="452" viewBox="353 254 1000 452" className="shrink-0 bg-[#f9f9f9]">
      <defs>
        <linearGradient id="edgeL">
          <stop offset="0" stopColor="#f9f9f9" />
          <stop offset="1" stopColor="#c4c4c4" />
        </linearGradient>
        <linearGradient id="edgeR">
          <stop offset="0" stopColor="#c4c4c4" />
          <stop offset="1" stopColor="#f9f9f9" />
        </linearGradient>
      </defs>
      <rect x="644" y="254" width="4" height="452" fill="url(#edgeL)" />
      <rect x="1096" y="254" width="4" height="452" fill="url(#edgeR)" />
      <rect x="648" y="254" width="448" height="452" fill="#fff" />
      <path d="M660.500 254V706M1083.500 254V706" stroke="#c2c2c2" strokeDasharray="2.500 1" fill="none" />
      <g fill="none" stroke="#a3c4e3">
        {links.map(([d], i) => (
          <path key={i} d={d} />
        ))}
        <path d="M849.500 361V346H898.500V321.500H894" />
        <path d="M908.500 508V518H955" stroke="#8fb6dc" />
      </g>
      <g fill="#5592cc">
        {links.map(([, x, y], i) => (
          <path key={i} d={`M${x - 2.6} ${y - 6}h5.200L${x} ${y - 0.5}z`} />
        ))}
        <path d="M889.300 321.300l5-2.600v5.200z" />
        <circle cx="849.300" cy="277.500" r="13.500" fill="#5b9bd5" />
        <path d="M849.300 361l12.800 12.700-12.800 12.700-12.800-12.700z" fill="#5b9bd5" />
      </g>
      <g fill="#4472c4" stroke="#c0cfeb" strokeWidth=".5">
        <rect x="744.700" y="423.700" width="209.300" height="12.800" />
        <rect x="735.700" y="658.200" width="299.300" height="12.800" />
      </g>
      <g fontFamily="Liberation Sans, sans-serif" fontSize="8.500">
        {nodes.map(([t, x, y, w]) => (
          <g key={t}>
            <rect x={x - 39.2} y={y - 12.7} width="78.500" height="25.600" rx="5.500" fill="#72ae42" stroke="#b7d79d" strokeWidth=".5" />
            <text x={x} y={Math.floor(y + 3.25)} textAnchor="middle" textLength={w} fill="#eef6e6">
              {t}
            </text>
          </g>
        ))}
        <text x="873" y="361.500" textLength="24" fill="#111">
          invalid
        </text>
        <text x="826" y="397.800" textLength="46" fill="#5f9fd4">
          authenticate
        </text>
        <text x="859" y="418.700" textLength="18" fill="#111">
          valid
        </text>
      </g>
    </svg>
  );
}

function Footer() {
  return (
    <>
      <div className="flex h-[12px] shrink-0 items-center border-b border-[#c4c4c4] border-t border-t-[#d2cfc8] bg-[#cdcdcd] pl-[263px]">
        <div className="h-[6px] w-[452px] rounded-full bg-[#7e8282]" />
        <div className="ml-auto h-[10px] w-3 bg-[#f3f3f3]" />
      </div>
      <div className="flex h-[27px] shrink-0 items-center border-b border-[#e0e0e0] bg-white pl-7">
        <div className="flex h-4 w-[81px] items-center justify-center border-x border-[#aaa] pr-px pt-[2px] font-['DejaVu_Serif_Condensed','DejaVu_Serif',serif] text-[13px] font-bold tracking-[0.250px] text-[#2f5597]">
          Page-1
        </div>
        <Ic s={17} className="ml-[31px]">
          <circle cx="8.500" cy="8.500" r="7.500" stroke="#4a62b0" strokeWidth="1.100" />
          <path d="M8.500 4.500v8M4.500 8.500h8" stroke="#4a62b0" strokeWidth="1.400" />
        </Ic>
      </div>
      <div className="flex flex-1 items-center bg-white pb-[2px] pl-[602px] font-['Liberation_Sans',sans-serif] text-[11px] text-[#333]">
        <Ic s={9}>
          <path d="M1 5h6.500" stroke="#333" strokeWidth="2" />
        </Ic>
        <svg width="101" height="16" viewBox="0 0 101 16" className="ml-[13px] shrink-0">
          <path d="M0 8h100M50.500 5.500v5" stroke="#444" />
          <path d="M11 2.500h4v11h-4z" fill="#444" />
        </svg>
        <Ic s={9} className="ml-[13px]">
          <path d="M0 5h8M4 1v8" stroke="#333" strokeWidth="2" />
        </Ic>
        <span className="ml-[12px] w-[36px]">55%</span>
        <Ic s={16} className="mt-[2px]">
          <path d="M1.500 1.500h13v13h-13z" stroke="#666" strokeWidth="1.200" />
          <path d="M6.500 6.500h3v3h-3z" stroke="#555" />
          <path d="M8 2.500l2 2.300H6zM8 13.500l2-2.300H6zM2.500 8l2.300-2v4zM13.500 8l-2.300-2v4z" fill="#3d7dbf" />
        </Ic>
        <span className="ml-[19px] whitespace-nowrap tracking-[-0.150px] text-[#484644]">GIVE FEEDBACK TO MICROSOFT</span>
      </div>
    </>
  );
}

export default function App() {
  return (
    <div className="flex h-[768px] w-[1366px] flex-col overflow-hidden bg-[#2f343f]">
      <TopBar />
      <div className="flex min-h-0 flex-1">
        <Dock />
        <main className="flex min-w-0 flex-1 flex-col">
          <TitleBar />
          <Tabs />
          <NavBar />
          <div className="flex h-[48px] shrink-0 items-center bg-[#3955a3] font-['Open_Sans',sans-serif] text-white">
            <div className="-mt-[2px] ml-[16px] grid grid-cols-3 gap-[3px]">
              {Array.from({ length: 9 }, (_, k) => (
                <i key={k} className="size-[3px] rounded-full bg-white" />
              ))}
            </div>
            <span className="ml-[25px] mt-[3px] w-[568px] text-[15.500px] font-semibold tracking-[-0.100px]">Visio</span>
            <span className="mt-[3px] whitespace-pre text-[13px] tracking-[0.120px]">Drawing4  -  Saved</span>
            <Ic s={10} className="ml-[16px] mt-[3px]">
              <path d="M1 3l4 4 4-4" stroke="#fff" />
            </Ic>
            <span className="ml-auto mr-[8px] mt-[4px] flex size-8 items-center justify-center rounded-full bg-[#00a300] text-[15px]">PM</span>
          </div>
          <Ribbon />
          <div className="flex min-h-0 flex-1 border-b border-[#b8b8b8]">
            <Sidebar />
            <div className="flex min-w-0 flex-1 flex-col border-l border-[#ececec]">
              <div className="flex h-[452px] shrink-0">
                <Canvas />
                <div className="flex w-3 flex-col items-center bg-[#cdcdcd] pt-[170px]">
                  <div className="h-[100px] w-[6px] rounded-full bg-[#7e8282]" />
                </div>
              </div>
              <Footer />
            </div>
            <i className="w-px shrink-0 bg-[#c0c0c0]" />
          </div>
        </main>
      </div>
    </div>
  );
}
